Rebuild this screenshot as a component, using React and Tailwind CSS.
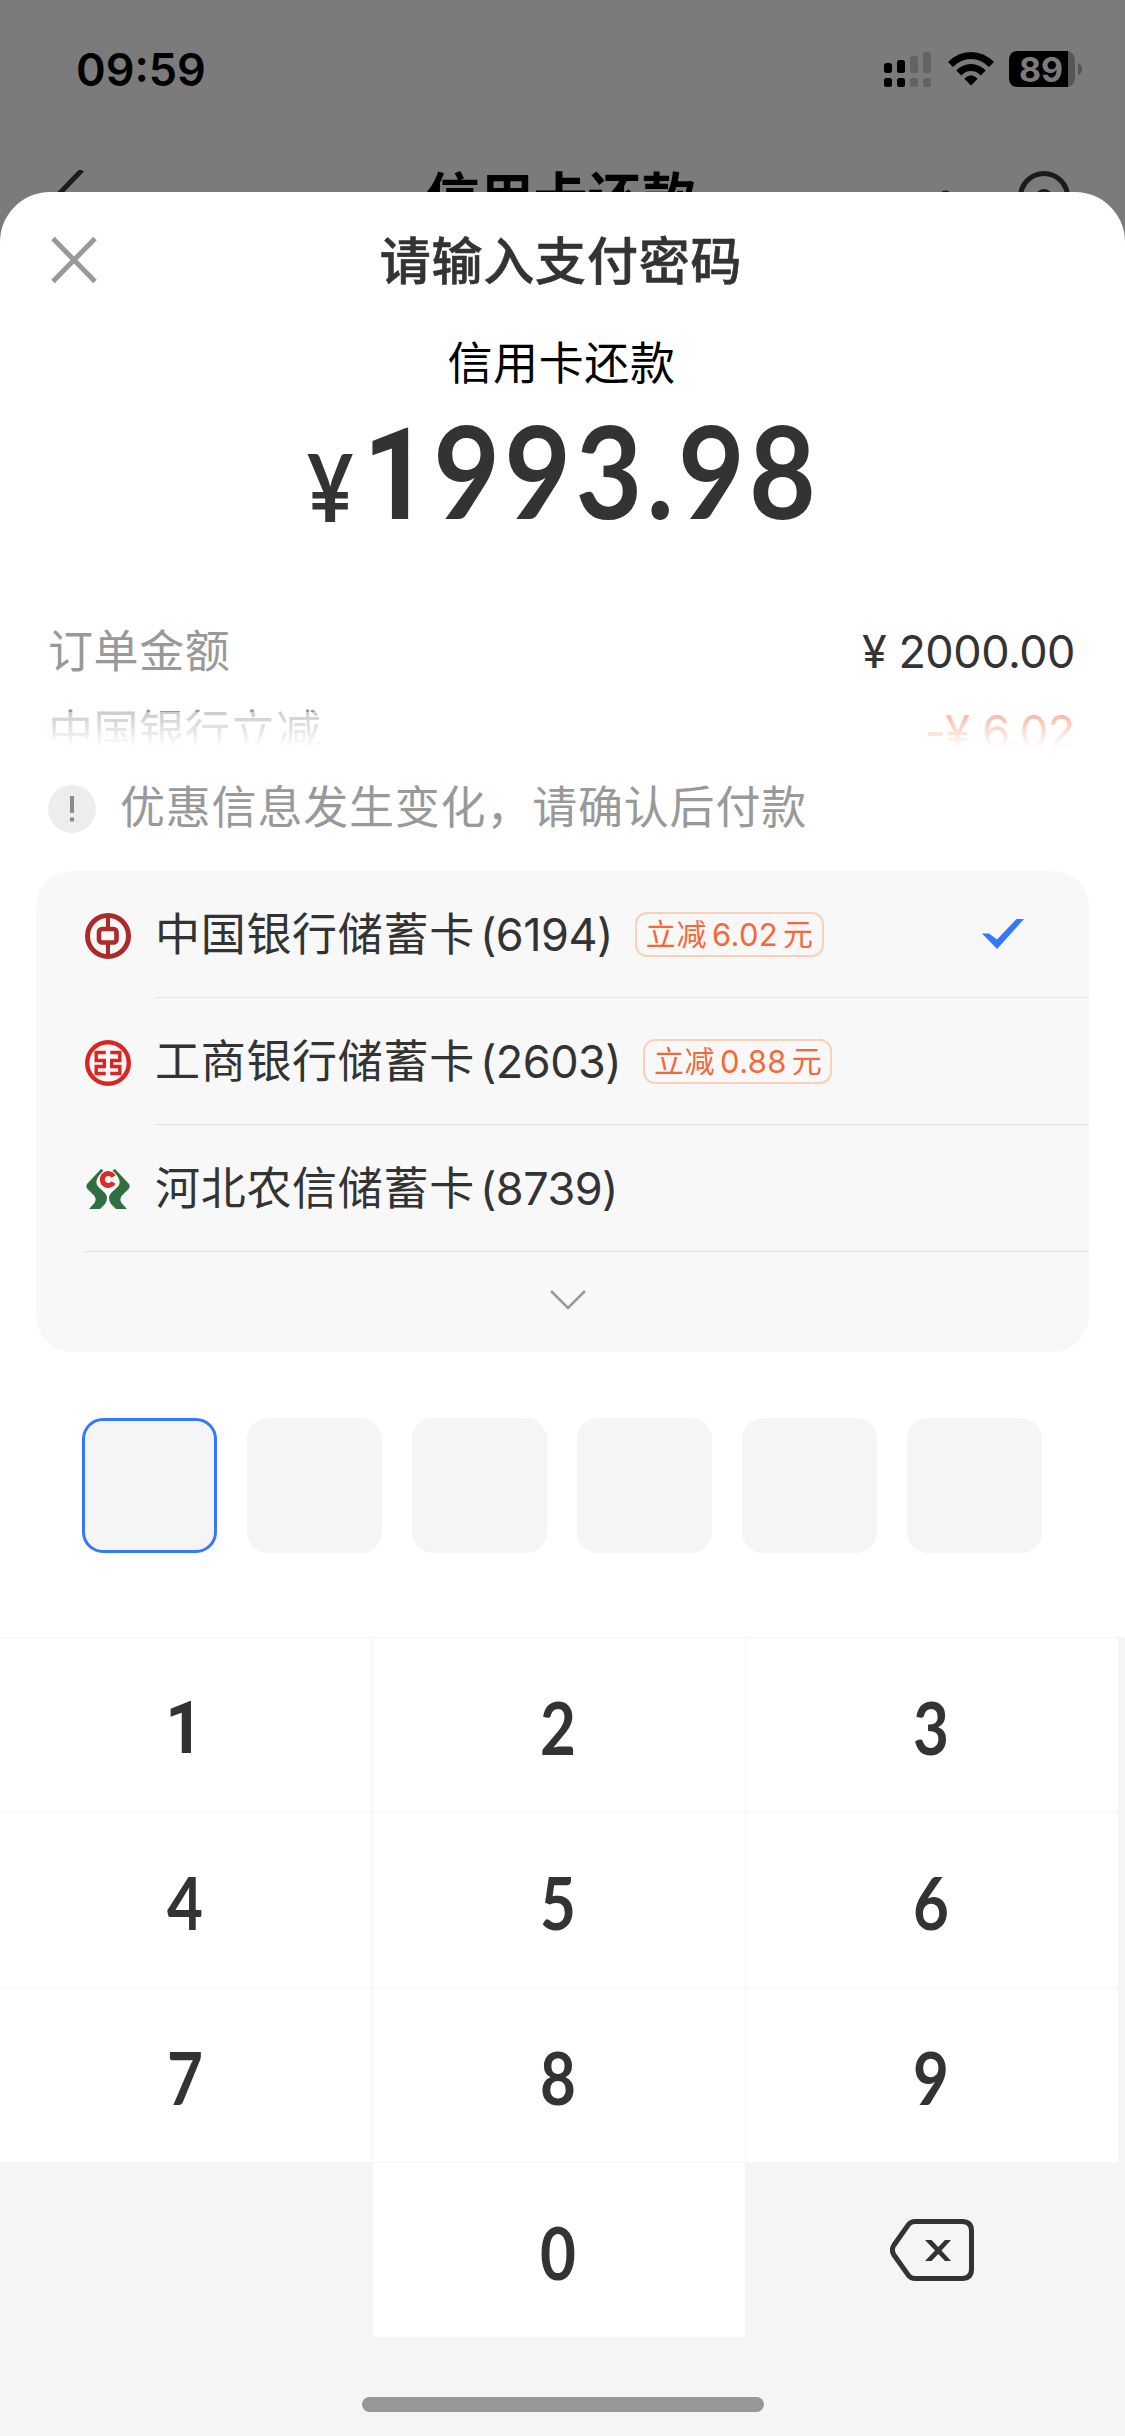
import React from "react";

const banks = [
  { name: "中国银行储蓄卡", tail: "(6194)", off: "6.02", checked: true, icon: "boc" },
  { name: "工商银行储蓄卡", tail: "(2603)", off: "0.88", icon: "icbc" },
  { name: "河北农信储蓄卡", tail: "(8739)", icon: "rcc" },
];

const keys = ["1", "2", "3", "4", "5", "6", "7", "8", "9"];

function BankIcon({ type }) {
  if (type === "boc") {
    return (
      <svg className="h-[46px] w-[46px] shrink-0" viewBox="0 0 46 46" fill="none" stroke="#ac2a27">
        <circle cx="23" cy="23" r="20.5" strokeWidth="5" />
        <path d="M23 3V15M23 31V43" strokeWidth="4" />
        <rect x="14" y="16" width="17.5" height="13.500" rx="3" strokeWidth="4.6" />
      </svg>
    );
  }
  if (type === "icbc") {
    return (
      <svg className="h-[46px] w-[46px] shrink-0" viewBox="0 0 46 46" fill="none" stroke="#d92623">
        <circle cx="23" cy="23" r="20.8" strokeWidth="4.4" />
        <path d="M20.700 12.500H11.200V20.500H19.300V26.500H11.200V33.500H20.700" strokeWidth="3.4" />
        <path d="M25.300 12.500H34.800V20.500H26.700V26.500H34.800V33.500H25.300" strokeWidth="3.4" />
      </svg>
    );
  }
  return (
    <svg className="h-[46px] w-[46px] shrink-0" viewBox="0 0 46 46">
      <g fill="#2f6f40">
        <path d="M16 2L2 17Q0.500 20 2.500 22L9 28.500Q12 32 9.500 36L4 42H15L20 37Q24 31 20 26L13.500 20Q7.500 14 18.500 3.500Z" />
        <path d="M30 2L44 17Q45.500 20 43.500 22L37 28.500Q34 32 36.500 36L42 42H31L26 37Q22 31 26 26L32.500 20Q38.500 14 27.500 3.500Z" />
      </g>
      <path d="M28.500 9.500A6 6 0 1 0 28.500 15.500" fill="none" stroke="#dc2a26" strokeWidth="5" />
    </svg>
  );
}

function StatusBar() {
  return (
    <div className="flex h-[138px] items-center justify-between pl-[76px] pr-[41px]">
      <span className="font-['Inter',sans-serif] text-[45px] font-semibold leading-none">09:59</span>
      <svg className="h-[54px] w-[200px]" viewBox="884 42 200 54">
        <rect x="884" y="63" width="8" height="10" rx="2.5" />
        <rect x="897" y="60" width="8" height="13" rx="2.5" />
        <rect x="884" y="78" width="8" height="9" rx="2.5" />
        <rect x="897" y="78" width="8" height="9" rx="2.5" />
        <g fill="#636363">
          <rect x="910" y="56" width="8" height="17" rx="2.5" />
          <rect x="923" y="52" width="8" height="21" rx="2.5" />
          <rect x="910" y="78" width="8" height="9" rx="2.5" />
          <rect x="923" y="78" width="8" height="9" rx="2.5" />
        </g>
        <g fill="none" stroke="#000" strokeWidth="7">
          <path d="M950.500 64.500Q959.500 55.500 971 55.500T991.500 64.500" />
          <path d="M958.800 73Q964 67.500 971 67.500T983.200 73" />
        </g>
        <path d="M964.300 78.800Q971 71.500 977.700 78.800L971 85.500Z" />
        <path d="M1018 51H1068V87H1018Q1009 87 1009 78V60Q1009 51 1018 51Z" />
        <path d="M1068 51Q1075 53 1075 61V77Q1075 85 1068 87Z" fill="#565656" />
        <path d="M1078 63Q1082 65 1082 69T1078 75Z" fill="#565656" />
        <text x="1041" y="81.500" textAnchor="middle" fill="#7b7b7b" className="font-['Inter',sans-serif] text-[34px] font-bold">89</text>
      </svg>
    </div>
  );
}

function DiscountTag({ amount }) {
  return (
    <span className="ml-[22px] flex h-[45px] w-[189px] items-center justify-center gap-[5px] rounded-[12px] border-2 border-[#fbd0b6] text-[30px] leading-none text-[#f4683a]">
      <span className="tracking-[0.6px]">立减</span>
      <span className="text-[31px] tracking-[0.3px]">{amount}</span>
      <span>元</span>
    </span>
  );
}

function BankRow({ bank, last }) {
  return (
    <div className={last ? "ml-[48px] flex h-[127px] items-center border-b border-[#e2e2e2] pl-px" : "ml-[49px] flex h-[127px] items-center"}>
      <div className="pt-[3px]">
        <BankIcon type={bank.icon} />
      </div>
      <div className={last ? "ml-[24px] flex h-full flex-1 items-center" : "ml-[24px] flex h-full flex-1 items-center border-b border-[#e2e2e2]"}>
        <span className="text-[45px] leading-none tracking-[0.7px]">{bank.name}</span>
        <span className="ml-[5px] text-[45px] leading-none tracking-[-0.5px]">{bank.tail}</span>
        {bank.off && <DiscountTag amount={bank.off} />}
        {bank.checked && (
          <svg className="ml-auto mr-[65px] h-[30px] w-[42px]" viewBox="0 0 42 30" fill="#3677ff">
            <path d="M0 14.500H7L15 20.500L34.500 0H42L15 30Z" />
          </svg>
        )}
      </div>
    </div>
  );
}

function Digit({ value }) {
  return (
    <div className="flex items-center justify-center bg-white pr-[2px] pt-[4px]">
      <span
        className={
          value === "1"
            ? "inline-block scale-x-90 pr-[2px] pt-[3px] font-['Roboto',sans-serif] text-[73px] font-bold leading-none"
            : "inline-block scale-x-[0.86] font-['Lato',sans-serif] text-[72px] font-bold leading-none"
        }
      >
        {value}
      </span>
    </div>
  );
}

export default function App() {
  return (
    <div className="h-[2436px] w-[1125px] overflow-hidden bg-[#7b7b7b] font-['Inter','Noto_Sans_CJK_SC',sans-serif] text-[#333]">
      <div className="h-[192px] text-black">
        <StatusBar />
        <div className="flex h-[54px] items-start justify-between pl-[50px] pr-[54px] pt-[32px]">
          <svg className="h-[54px] w-[150px] shrink-0" viewBox="50 170 150 54" fill="none" stroke="#1c1c1c" strokeWidth="5">
            <path d="M82 170L57 196L82 222" />
          </svg>
          <span className="mt-[2px] text-[54px] font-bold leading-[54px]">信用卡还款</span>
          <svg className="h-[54px] w-[150px] shrink-0" viewBox="921 170 150 54" fill="#1c1c1c">
            <circle cx="926" cy="197" r="4.5" />
            <circle cx="945.500" cy="197" r="6.5" />
            <circle cx="964" cy="197" r="4.5" />
            <circle cx="1044" cy="197" r="23.500" fill="none" stroke="#1c1c1c" strokeWidth="5" />
            <circle cx="1044" cy="197" r="8" />
          </svg>
        </div>
      </div>

      <div className="relative flex h-[2244px] flex-col rounded-t-[50px] bg-white">
        {/* Header */}
        <div className="flex h-[136px] items-center justify-between pl-[51px] pr-[54px]">
          <svg className="h-[46px] w-[46px]" viewBox="0 0 46 46" stroke="#999" strokeWidth="5">
            <path d="M2 1.500L44 44.500M44 1.500L2 44.500" />
          </svg>
          <h1 className="pt-[3px] text-[51px] font-medium leading-none tracking-[0.8px] [-webkit-text-stroke:0.6px_#333]">请输入支付密码</h1>
          <span className="w-[46px]" />
        </div>

        <div className="flex h-[70px] items-center justify-center pr-[2px] text-[45px] leading-none tracking-[0.6px] text-black">信用卡还款</div>

        {/* Amount */}
        <div className="flex h-[152px] items-baseline pl-[307px] font-['Lato',sans-serif] font-bold leading-[143px]">
          <span className="relative top-[3px] w-[56px] origin-left scale-x-[0.85] text-[94px]">¥</span>
          <span className="origin-left scale-x-90 whitespace-nowrap text-[128px] tracking-[4.7px]">
            <span className="font-['Roboto',sans-serif]">1</span>993.98
          </span>
        </div>

        {/* Order detail, the second line fades out */}
        <div className="relative mt-[61px] h-[160px] pl-[48px] pr-[50px] text-[45px] leading-none">
          <div className="flex h-[80px] items-center justify-between">
            <span className="tracking-[0.6px] text-[#999]">订单金额</span>
            <span className="tracking-[-0.5px]">¥ 2000.00</span>
          </div>
          <div className="flex h-[80px] items-center justify-between">
            <span className="tracking-[0.6px] text-[#999]">中国银行立减</span>
            <span className="tracking-[-0.3px] text-[#f4683a]">-¥ 6.02</span>
          </div>
          <div className="absolute inset-x-0 bottom-0 h-[59px] bg-linear-to-b from-white/50 to-white to-60%" />
        </div>

        <div className="flex h-[76px] items-center pl-[48px] text-[#999]">
          <span className="flex h-[48px] w-[48px] items-center justify-center rounded-full bg-[#ededed]">
            <svg className="h-[26px] w-[4px]" viewBox="0 0 4 26" fill="#8c8c8c">
              <rect width="4" height="17" />
              <rect y="21.500" width="4" height="4" />
            </svg>
          </span>
          <span className="ml-[24px] pb-[3px] text-[45px] leading-none tracking-[0.8px]">优惠信息发生变化，请确认后付款</span>
        </div>

        {/* Bank cards */}
        <div className="ml-[36px] mt-[24px] h-[481px] w-[1053px] rounded-[36px] bg-[#f8f8f8]">
          {banks.map((bank, i) => (
            <BankRow key={bank.icon} bank={bank} last={i === banks.length - 1} />
          ))}
          <div className="flex h-[96px] items-center justify-center pl-[10px]">
            <svg className="h-[20px] w-[36px]" viewBox="0 0 36 20" fill="none" stroke="#999" strokeWidth="2.5">
              <path d="M1 1L18 18L35 1" />
            </svg>
          </div>
        </div>

        {/* Password boxes */}
        <div className="mt-[66px] flex gap-[30px] px-[82px]">
          <div className="h-[135px] w-[135px] rounded-[21px] border-3 border-[#3677ff] bg-[#f5f5f5]" />
          {[1, 2, 3, 4, 5].map((n) => (
            <div key={n} className="h-[135px] w-[135px] rounded-[21px] bg-[#f5f5f5]" />
          ))}
        </div>

        {/* Keypad */}
        <div className="mt-[84px] flex flex-1 flex-col items-center bg-[#f5f5f5] pt-px">
          <div className="grid w-[1118px] grid-cols-3 grid-rows-[repeat(4,174px)] gap-px self-start">
            {keys.map((key) => (
              <Digit key={key} value={key} />
            ))}
            <div />
            <Digit value="0" />
            <div className="flex items-center justify-center">
              <svg className="h-[62px] w-[84px]" viewBox="0 0 84 62" fill="none" stroke="#333" strokeWidth="5">
                <path d="M25 2.500H72Q81.500 2.500 81.500 12V50Q81.500 59.500 72 59.500H25Q21 59.500 18.500 56.500L4 36Q0.800 31 4 26L18.500 5.500Q21 2.500 25 2.500Z" />
                <path d="M35 21H41.500L48.200 28L55 21H61L51.500 31.500L61 42H55L48.200 35L41.500 42H35L45 31.500Z" fill="#333" stroke="none" />
              </svg>
            </div>
          </div>
          <div className="mt-[60px] h-[15px] w-[402px] rounded-full bg-[#979797]" />
        </div>
      </div>
    </div>
  );
}
